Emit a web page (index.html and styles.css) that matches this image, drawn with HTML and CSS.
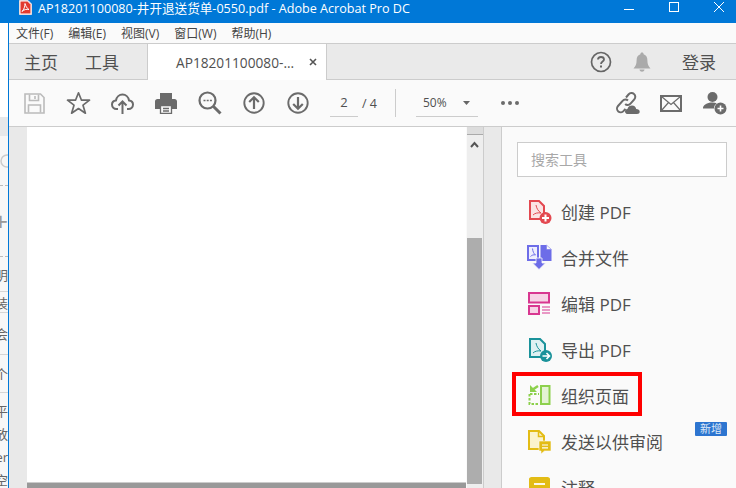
FILE: index.html
```html
<!DOCTYPE HTML>
<html lang="zh-CN">
<head>
	<title>Adobe Acrobat Pro DC</title>
	<meta charset="utf-8">
	<link rel="stylesheet" href="styles.css">
</head>
<body>

	<!-- title bar -->
	<header class="titlebar">
		<svg class="pdf-icon" width="13" height="15" viewBox="0 0 13 15">
			<path d="M0.5 0.5H9L12.5 4V14.5H0.5Z" fill="#fff" stroke="#e8dcdc"/>
			<path d="M1.5 1.5H8.5L11.5 4.5V13.5H1.5Z" fill="#e23b2e"/>
			<path d="M6 3.5C6.8 6 7.5 8 10 9.5C7.5 9 5 9.5 3 11.5C5 9.5 6 6.5 6 3.5Z" fill="none" stroke="#fff" stroke-width="1"/>
		</svg>
		<span class="title-text">AP18201100080-井开退送货单-0550.pdf - Adobe Acrobat Pro DC</span>
		<div class="win-controls">
			<svg width="10" height="10" viewBox="0 0 10 10"><path d="M0 7.5H10" stroke="#fff"/></svg>
			<svg width="10" height="10" viewBox="0 0 10 10"><rect x="0.5" y="0.5" width="9" height="9" fill="none" stroke="#fff"/></svg>
			<svg width="10" height="10" viewBox="0 0 10 10"><path d="M0 0L10 10M10 0L0 10" stroke="#fff"/></svg>
		</div>
	</header>

	<div class="frame">

		<!-- bits of the window behind -->
		<div class="behind">
			<div class="bit h94"></div>
			<div class="bit h19 shade"></div>
			<div class="bit h50 dash">
				<svg width="8" height="14" viewBox="0 0 8 14"><circle cx="7" cy="7" r="6" fill="none" stroke="#ccc" stroke-width="1.5"/></svg>
			</div>
			<div class="bit h71 dash big">+</div>
			<div class="bit h35 line">明</div>
			<div class="bit h21 line">装</div>
			<div class="bit h42 line">会</div>
			<div class="bit h38 line">个</div>
			<div class="bit h6"></div>
			<div class="bit h23">平</div>
			<div class="bit h23">放</div>
			<div class="bit h23">er</div>
			<div class="bit h23">空</div>
		</div>

		<div class="window">

			<div class="menubar">
				<span>文件(F)</span>
				<span>编辑(E)</span>
				<span>视图(V)</span>
				<span>窗口(W)</span>
				<span>帮助(H)</span>
			</div>

			<!-- tabs -->
			<nav class="tabbar">
				<a class="tab-link">主页</a>
				<a class="tab-link">工具</a>
				<div class="tab-active">
					<span>AP18201100080-...</span>
					<svg width="8" height="8" viewBox="0 0 8 8"><path d="M1 1L7 7M7 1L1 7" stroke="#555" stroke-width="1.6"/></svg>
				</div>
				<div class="tab-right">
					<svg width="22" height="22" viewBox="0 0 22 22">
						<circle cx="11" cy="11" r="9.5" fill="none" stroke="#666" stroke-width="1.7"/>
						<path d="M8 8.6C8 6.8 9.4 6 11 6C12.8 6 14 7 14 8.5C14 10.6 11 10.6 11 13" fill="none" stroke="#666" stroke-width="1.8"/>
						<rect x="10" y="14.5" width="2" height="2" fill="#666"/>
					</svg>
					<svg class="bell" width="18" height="20" viewBox="0 0 18 20">
						<path d="M9 0.5C10 0.5 10.6 1.2 10.6 2.2C13.4 3 14.4 5.4 14.4 8.5C14.4 12 15.4 14 17.5 16.5H0.5C2.6 14 3.6 12 3.6 8.5C3.6 5.4 4.6 3 7.4 2.2C7.4 1.2 8 0.5 9 0.5Z" fill="#aaa"/>
						<path d="M6.5 17.5H11.5C11.3 19 10.2 19.7 9 19.7C7.8 19.7 6.7 19 6.5 17.5Z" fill="#aaa"/>
					</svg>
					<span class="login">登录</span>
				</div>
			</nav>

			<!-- toolbar -->
			<div class="toolbar">
				<div class="tool">
					<svg width="21" height="21" viewBox="0 0 21 21">
						<path d="M1 1H16.5L20 4.5V20H1Z" fill="none" stroke="#bbb" stroke-width="1.6"/>
						<path d="M5.5 1.5V7.5H14.5V1.5M11 3V6" fill="none" stroke="#bbb" stroke-width="1.6"/>
						<path d="M4.5 19.5V12H16.5V19.5" fill="none" stroke="#bbb" stroke-width="1.6"/>
					</svg>
				</div>
				<div class="tool">
					<svg width="25" height="24" viewBox="0 0 25 24">
						<path d="M12.5 1.8L15.5 9.2H23.5L17 14.2L19.4 22.2L12.5 17.5L5.6 22.2L8 14.2L1.5 9.2H9.5Z" fill="none" stroke="#6b6b6b" stroke-width="1.7" stroke-linejoin="round"/>
					</svg>
				</div>
				<div class="tool">
					<svg width="23" height="21" viewBox="0 0 23 21">
						<path d="M7 16H5.5C3 16 1 14 1 11.6C1 9.3 2.8 7.6 5 7.4C5.6 4 8.2 1.5 11.5 1.5C14.8 1.5 17.4 4 18 7.4C20.2 7.6 22 9.3 22 11.6C22 14 20 16 17.5 16H16" fill="none" stroke="#6b6b6b" stroke-width="2"/>
						<path d="M11.5 21V9M7.5 12.5L11.5 8.5L15.5 12.5" fill="none" stroke="#6b6b6b" stroke-width="2"/>
					</svg>
				</div>
				<div class="tool">
					<svg width="22" height="21" viewBox="0 0 22 21">
						<path d="M5 0H17V6H5Z" fill="#6b6b6b"/>
						<path d="M2.5 6H19.5C21 6 22 7 22 8.5V16H17V12H5V16H0V8.5C0 7 1 6 2.5 6Z" fill="#6b6b6b"/>
						<path d="M5.5 12.5H16.5V20.5H5.5Z" fill="none" stroke="#6b6b6b" stroke-width="1.3"/>
						<path d="M8 15.5H14M8 18H14" stroke="#6b6b6b" stroke-width="1.3"/>
					</svg>
				</div>
				<div class="tool">
					<svg width="24" height="24" viewBox="0 0 24 24">
						<circle cx="9.5" cy="9.5" r="8" fill="none" stroke="#6b6b6b" stroke-width="2.2"/>
						<path d="M15.5 15.5L22.5 22.5" stroke="#6b6b6b" stroke-width="3"/>
						<path d="M5.5 9.5H7.5M8.7 9.5H10.7M11.9 9.5H13.9" stroke="#6b6b6b" stroke-width="1.6"/>
					</svg>
				</div>
				<div class="tool">
					<svg width="22" height="22" viewBox="0 0 22 22">
						<circle cx="11" cy="11" r="9.7" fill="none" stroke="#6b6b6b" stroke-width="1.9"/>
						<path d="M11 17V5.5M6.2 10L11 5.2L15.8 10" fill="none" stroke="#6b6b6b" stroke-width="2.2"/>
					</svg>
				</div>
				<div class="tool">
					<svg width="22" height="22" viewBox="0 0 22 22">
						<circle cx="11" cy="11" r="9.7" fill="none" stroke="#6b6b6b" stroke-width="1.9"/>
						<path d="M11 5V16.5M6.2 12L11 16.8L15.8 12" fill="none" stroke="#6b6b6b" stroke-width="2.2"/>
					</svg>
				</div>
				<div class="page-num">2</div>
				<div class="page-total">/ 4</div>
				<div class="tool-sep"></div>
				<div class="zoom-box">
					<span>50%</span>
					<svg width="7" height="4" viewBox="0 0 7 4"><path d="M0 0H7L3.5 4Z" fill="#666"/></svg>
				</div>
				<svg class="dots" width="18" height="4" viewBox="0 0 18 4">
					<circle cx="2" cy="2" r="2" fill="#6b6b6b"/>
					<circle cx="9" cy="2" r="2" fill="#6b6b6b"/>
					<circle cx="16" cy="2" r="2" fill="#6b6b6b"/>
				</svg>
				<div class="tool-right">
					<div class="tool">
						<svg width="25" height="24" viewBox="0 0 25 24">
							<path d="M11 6.5L13.5 3.5C15 1.8 17.5 1.6 19 3C20.6 4.4 20.7 6.8 19.3 8.4L15.5 12.6C14 14.2 11.6 14.4 10.2 13" fill="none" stroke="#6b6b6b" stroke-width="2"/>
							<path d="M13 9.5C11.5 8 9 8.2 7.6 9.8L3 15C1.6 16.6 1.7 19 3.3 20.4C4.8 21.7 7.2 21.5 8.7 19.9L10.5 17.8" fill="none" stroke="#6b6b6b" stroke-width="2"/>
							<path d="M13 23C11 23 10 21.7 10 20.4C10 19 11 18 12.4 18C13 15.6 15 14.5 17 14.5C19.4 14.5 21 16.2 21.2 18C23.2 18 24.7 19 24.7 20.7C24.7 22 23.6 23 22 23Z" fill="#6b6b6b"/>
						</svg>
					</div>
					<div class="tool">
						<svg width="22" height="17" viewBox="0 0 22 17">
							<rect x="1" y="1" width="20" height="15" fill="none" stroke="#6b6b6b" stroke-width="2"/>
							<path d="M1.5 1.5L11 9.5L20.5 1.5M1.5 15.5L8.5 7.5M20.5 15.5L13.5 7.5" fill="none" stroke="#6b6b6b" stroke-width="1.2"/>
						</svg>
					</div>
					<div class="tool">
						<svg width="24" height="24" viewBox="0 0 24 24">
							<circle cx="9.5" cy="6" r="5" fill="#6b6b6b"/>
							<path d="M0 16.5C1 13 5 11.5 9.5 11.5C11 11.5 12.5 11.7 13.8 12.2C12 13.5 11 15 11 17.5H0Z" fill="#6b6b6b"/>
							<circle cx="17.5" cy="17.5" r="6" fill="#6b6b6b"/>
							<path d="M14.5 17.5H20.5M17.5 14.5V20.5" stroke="#fff" stroke-width="1.6"/>
						</svg>
					</div>
				</div>
			</div>

			<div class="workarea">

				<!-- document -->
				<div class="gutter"></div>
				<main class="doc-col">
					<div class="doc-page"></div>
					<div class="h-scroll"></div>
				</main>
				<div class="v-scroll">
					<div class="v-scroll-top"></div>
					<svg class="v-arrow" width="9" height="7" viewBox="0 0 9 7"><path d="M1 6L4.5 2L8 6" fill="none" stroke="#555" stroke-width="2"/></svg>
					<div class="v-thumb"></div>
				</div>
				<div class="gutter-right"></div>

				<!-- tools pane -->
				<aside class="pane">
					<div class="search">搜索工具</div>
					<div class="pane-item">
						<svg width="28" height="26" viewBox="0 0 28 26">
							<path d="M4 3H13L18 8V21H4Z" fill="#fbe3e4" stroke="#e34850" stroke-width="2"/>
							<path d="M10 7C10.5 10 12 13 15 15C12 14.5 9 15 7 17" fill="none" stroke="#e34850"/>
							<circle cx="19.5" cy="20" r="6" fill="#e34850"/>
							<path d="M16 20H23M19.5 16.5V23.5" stroke="#fff" stroke-width="2"/>
						</svg>
						<span>创建 PDF</span>
					</div>
					<div class="pane-item">
						<svg width="28" height="26" viewBox="0 0 28 26">
							<path d="M2 2H12V16H2Z" fill="#eeeefd" stroke="#6d6de8" stroke-width="2"/>
							<path d="M6.5 4.5C6.8 7.5 7.7 9.5 9.5 11C7.5 10.5 6 11 4.5 12.5" fill="none" stroke="#6d6de8"/>
							<path d="M14.5 1H20L25.5 6V17H14.5Z" fill="#6d6de8"/>
							<path d="M20.5 1L25.5 5.5H20.5Z" fill="#fafafa" stroke="#6d6de8" stroke-width="0.5"/>
							<path d="M10 14H16V19H19.5L13 25.5L6.5 19H10Z" fill="#6d6de8" stroke="#fafafa" stroke-width="0.8"/>
						</svg>
						<span>合并文件</span>
					</div>
					<div class="pane-item">
						<svg width="28" height="26" viewBox="0 0 28 26">
							<rect x="3" y="3" width="20" height="9.5" fill="#f7d3e6" stroke="#d83790" stroke-width="2"/>
							<rect x="3" y="16" width="10" height="8" fill="#f7d3e6" stroke="#d83790" stroke-width="2"/>
							<path d="M16 17H24M16 20H24M16 23H24" stroke="#d83790"/>
						</svg>
						<span>编辑 PDF</span>
					</div>
					<div class="pane-item">
						<svg width="28" height="26" viewBox="0 0 28 26">
							<path d="M4 3H14L19 8V21H4Z" fill="#dff1f2" stroke="#1a929a" stroke-width="2"/>
							<path d="M10 7C10.5 10 12 13 15 15C12 14.5 9 15 7 17" fill="none" stroke="#1a929a"/>
							<circle cx="20" cy="20" r="6" fill="#1a929a"/>
							<path d="M16.5 20H23M20.5 17L23.5 20L20.5 23" fill="none" stroke="#fff" stroke-width="1.6"/>
						</svg>
						<span>导出 PDF</span>
					</div>
					<div class="pane-item">
						<svg width="28" height="26" viewBox="0 0 28 26">
							<rect x="15" y="4" width="8.5" height="18" fill="#e3f3d3" stroke="#8cd04c" stroke-width="2"/>
							<path d="M3.5 12V22H13M4 12H13" fill="none" stroke="#8cd04c" stroke-width="2" stroke-dasharray="2.5 1.5"/>
							<path d="M4 3L11 10H4Z" fill="#8cd04c" transform="rotate(0)"/>
							<path d="M6 8L12 4" stroke="#8cd04c" stroke-width="2.4"/>
						</svg>
						<span>组织页面</span>
					</div>
					<div class="pane-item">
						<svg width="28" height="26" viewBox="0 0 28 26">
							<path d="M3 3H13L18 8V21H3Z" fill="#fbf3cc" stroke="#e3bc15" stroke-width="2"/>
							<path d="M12.5 3V8.5H18" fill="none" stroke="#e3bc15" stroke-width="1.5"/>
							<path d="M13 13H25V23H18.5L15 26V23H13Z" fill="#e3bc15" stroke="#fafafa" stroke-width="0.6"/>
							<path d="M16 17H22M16 19.8H22" stroke="#fff" stroke-width="1.2"/>
						</svg>
						<span>发送以供审阅</span>
					</div>
					<div class="pane-item">
						<svg width="28" height="26" viewBox="0 0 28 26">
							<path d="M3 5C3 4 4 3 5.5 3H21.5C23 3 24 4 24 5V26H3Z" fill="#e3bc15"/>
							<path d="M8 10H19" stroke="#fff" stroke-width="1.8"/>
						</svg>
						<span>注释</span>
					</div>
					<div class="red-box"></div>
					<div class="badge">新增</div>
				</aside>
			</div>
		</div>
	</div>

</body>
</html>
```

FILE: styles.css
```css
html, body {
	margin: 0;
	height: 488px;
	overflow: hidden;
}
body {
	width: 736px;
	background-color: #fafafa;
	color: #505050;
	font-family: "Open Sans", "Noto Sans CJK SC", sans-serif;
}

/* title bar */
.titlebar {
	display: flex;
	align-items: flex-start;
	height: 23px;
	background-color: #0078d7;
	color: #fff;
}
.pdf-icon {
	margin-left: 19px;
	flex-shrink: 0;
}
.title-text {
	margin-left: 6px;
	font-size: 12.6px;
	line-height: 17px;
	white-space: nowrap;
}
.win-controls {
	display: flex;
	gap: 35px;
	margin-left: auto;
	padding: 2px 12px 0 0;
}

.frame {
	display: flex;
	height: 465px;
}

/* what shows of the window behind */
.behind {
	width: 8px;
	flex-shrink: 0;
	overflow: hidden;
	background-color: #f7f7f7;
	font-size: 13px;
	color: #666;
}
.bit {
	display: flex;
	justify-content: flex-end;
	align-items: center;
	box-sizing: border-box;
	white-space: nowrap;
}
.bit svg { flex-shrink: 0; }
.big { font-size: 26px; color: #999; }
.shade { background-color: #e6e8ea; }
.dash { border-bottom: 1px dashed #bbb; }
.line { border-bottom: 1px solid #d5d5d5; }
.h6 { height: 6px; }
.h19 { height: 19px; }
.h21 { height: 21px; }
.h23 { height: 23px; }
.h35 { height: 35px; }
.h38 { height: 38px; }
.h42 { height: 42px; }
.h50 { height: 50px; }
.h71 { height: 71px; }
.h94 { height: 94px; background-color: #fff; }

.window {
	flex: 1;
	min-width: 0;
	border-left: 1px solid #0078d7;
	display: flex;
	flex-direction: column;
}

.menubar {
	display: flex;
	gap: 15px;
	align-items: center;
	height: 20px;
	padding-left: 7px;
	background-color: #fafafa;
	font-size: 12px;
	color: #444;
	border-bottom: 1px solid #ccc;
	flex-shrink: 0;
}

/* tabs */
.tabbar {
	display: flex;
	align-items: center;
	height: 35px;
	background-color: #eaeaea;
	border-bottom: 1px solid #ccc;
	font-size: 17px;
	flex-shrink: 0;
}
.tab-link {
	margin-left: 15px;
	margin-right: 12px;
}
.tab-active {
	display: flex;
	align-items: center;
	justify-content: space-between;
	box-sizing: border-box;
	width: 180px;
	height: 36px;
	margin-left: 16px;
	margin-top: 1px;
	padding: 0 9px 0 28px;
	background-color: #fff;
	border-left: 1px solid #ccc;
	border-right: 1px solid #ccc;
	font-size: 13.7px;
}
.tab-right {
	display: flex;
	align-items: center;
	margin-left: auto;
	padding-right: 20px;
}
.bell { margin-left: 21px; }
.login { margin-left: 31px; }

/* toolbar */
.toolbar {
	display: flex;
	align-items: center;
	height: 46px;
	padding-left: 3px;
	background-color: #fafafa;
	border-bottom: 1px solid #ccc;
	flex-shrink: 0;
}
.tool {
	display: flex;
	justify-content: center;
	align-items: center;
	width: 44px;
	flex-shrink: 0;
}
.page-num {
	box-sizing: border-box;
	width: 28px;
	height: 28px;
	margin-left: 10px;
	line-height: 26px;
	text-align: center;
	font-size: 13px;
	border-bottom: 1px solid #ccc;
}
.page-total {
	width: 15px;
	margin-left: 4px;
	font-size: 12.5px;
	white-space: nowrap;
}
.tool-sep {
	width: 1px;
	height: 28px;
	margin-left: 18px;
	background-color: #ccc;
}
.zoom-box {
	display: flex;
	align-items: center;
	justify-content: space-between;
	box-sizing: border-box;
	width: 62px;
	height: 28px;
	margin-left: 20px;
	padding: 0 8px 0 7px;
	font-size: 12px;
	border-bottom: 1px solid #ccc;
}
.dots { margin-left: 23px; }
.tool-right {
	display: flex;
	margin-left: auto;
	margin-right: -1px;
}

.workarea {
	flex: 1;
	display: flex;
	min-height: 0;
}
.gutter {
	width: 18px;
	background-color: #e9e9e9;
}
.doc-col {
	width: 439px;
	display: flex;
	flex-direction: column;
	background-color: #fff;
}
.doc-page { flex: 1; }
.h-scroll {
	height: 5px;
	background-color: #999;
	border-top: 1px solid #ccc;
}
.v-scroll {
	width: 16px;
	margin-left: 1px;
	display: flex;
	flex-direction: column;
	background-color: #eee;
	border-right: 1px solid #ccc;
}
.v-scroll-top {
	height: 7px;
	background-color: #ddd;
	border-bottom: 1px solid #aaa;
}
.v-arrow { margin: 6px 0 0 3px; }
.v-thumb {
	width: 15px;
	height: 246px;
	margin-top: 90px;
	background-color: #adadad;
}
.gutter-right {
	width: 17px;
	background-color: #e9e9e9;
	border-right: 1px solid #ccc;
}

/* tools pane */
.pane {
	position: relative;
	flex: 1;
	min-width: 0;
	background-color: #fafafa;
}
.search {
	box-sizing: border-box;
	width: 210px;
	height: 35px;
	margin: 15px 0 11px 15px;
	padding-left: 13px;
	line-height: 33px;
	background-color: #fff;
	border: 1px solid #ccc;
	color: #a8a8a8;
	font-size: 14px;
}
.pane-item {
	display: flex;
	align-items: center;
	gap: 7px;
	height: 46px;
	padding-left: 24px;
	font-size: 17px;
	white-space: nowrap;
}
.pane-item svg { flex-shrink: 0; }
.red-box {
	position: absolute;
	left: 10px;
	top: 245px;
	box-sizing: border-box;
	width: 130px;
	height: 44px;
	border: 4px solid #f00;
}
.badge {
	position: absolute;
	left: 193px;
	top: 295px;
	width: 32px;
	height: 14px;
	line-height: 14px;
	text-align: center;
	background-color: #2d75d0;
	color: #dfe9f7;
	font-size: 11px;
	border-radius: 1px;
}
```
